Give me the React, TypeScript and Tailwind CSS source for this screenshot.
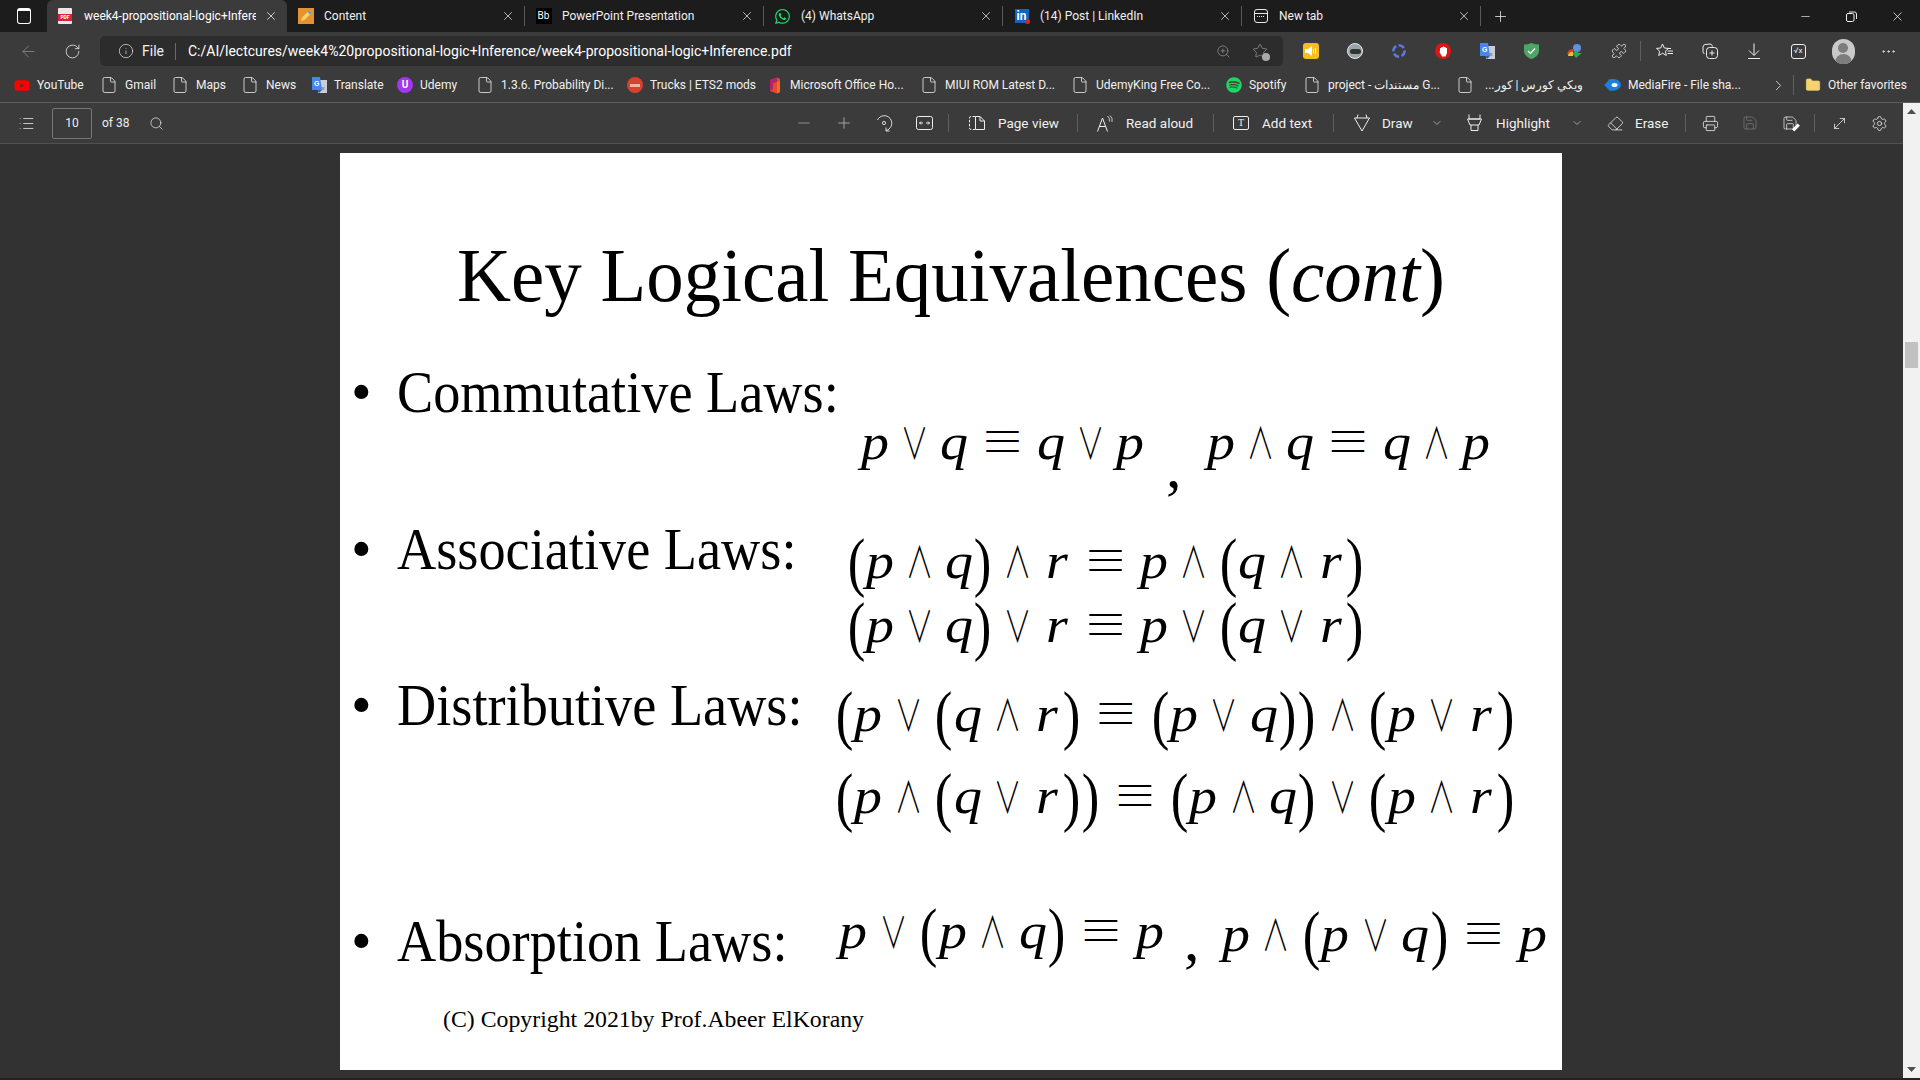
import { ArrowLeft, RotateCw, Info, ZoomIn, File, Search, X, Plus, Minus, Settings, Printer, Save, Eraser, ChevronDown, ChevronRight, MoreHorizontal, Puzzle, Star, List, MoveDiagonal, Folder } from 'lucide-react'
import { FaWhatsapp, FaYoutube, FaSpotify } from 'react-icons/fa'

const ui = "font-['Roboto',sans-serif]"

const FileIcon = () => <File size={18} strokeWidth={1.1} className="text-[#e8e8e8] shrink-0" />

const Translate = () => (
  <svg width="16" height="16" viewBox="0 0 16 16" className="shrink-0">
    <rect x="7" y="3" width="9" height="13" fill="#c9ced6" />
    <path d="M1 0 H9 L11 13 H1 Z" fill="#4a86e8" />
    <path d="M6 13 H11 L8 16 Z" fill="#2f5fb3" />
    <text x="3" y="9" fontSize="7" fill="#fff" fontWeight="700" fontFamily="Liberation Sans">G</text>
    <text x="10.5" y="13" fontSize="6" fill="#555" fontFamily="Liberation Sans">x</text>
  </svg>
)

const bookmarks = [
  { w: 'w-[86px]', label: 'YouTube', icon: <span className="w-4 h-4 shrink-0 flex items-center justify-center text-[#f00] "><FaYoutube size={17} /></span> },
  { w: 'w-[71px]', label: 'Gmail', icon: <FileIcon /> },
  { w: 'w-[70px]', label: 'Maps', icon: <FileIcon /> },
  { w: 'w-[70px]', label: 'News', icon: <FileIcon /> },
  { w: 'w-[86px]', label: 'Translate', icon: <Translate /> },
  { w: 'w-[79px]', label: 'Udemy', icon: <span className="w-4 h-4 shrink-0 rounded-full bg-[#a435f0] flex items-center justify-center text-white text-[10px] font-bold leading-none">U</span> },
  { w: 'w-[151px]', label: '1.3.6. Probability Di...', icon: <FileIcon /> },
  { w: 'w-[140px]', label: 'Trucks | ETS2 mods', icon: <span className="w-4 h-4 shrink-0 rounded-full bg-[#d8412f] flex items-center justify-center"><span className="w-2.5 h-[3px] bg-[#f3b4a8]" /></span> },
  {
    w: 'w-[153px]', label: 'Microsoft Office Ho...', icon: (
      <svg width="16" height="17" viewBox="0 0 16 17" className="shrink-0">
        <path d="M3 3 L10 0.5 L13 2 L13 15 L10 16.5 L3 14 Z" fill="#e8492a" />
        <path d="M3 3 L10 0.5 L10 5 L6 6 L6 12 L3 14 Z" fill="#b3236b" />
        <path d="M10 5 L13 4 L13 15 L10 16.5 Z" fill="#f26b21" />
      </svg>
    )
  },
  { w: 'w-[151px]', label: 'MIUI ROM Latest D...', icon: <FileIcon /> },
  { w: 'w-[155px]', label: 'UdemyKing Free Co...', icon: <FileIcon /> },
  { w: 'w-[77px]', label: 'Spotify', icon: <span className="text-[#1ed760] shrink-0"><FaSpotify size={16} /></span> },
  { w: 'w-[153px]', label: 'project - مستندات G...', icon: <FileIcon /> },
  { w: 'w-[148px]', label: '...ويكي كورس | كور', icon: <FileIcon />, gap: 'gap-[11px]' },
  {
    w: 'w-[166px]', label: 'MediaFire - File sha...', icon: (
      <svg width="17" height="12" viewBox="0 0 17 12" className="shrink-0">
        <path d="M0 6 C3 4 3 2 5 2 L4 1 C7 -0.5 16 -1 17 6 C16 12 7 12.5 4 11 L5 10 C3 10 3 8 0 6 Z" fill="#1b7fdb" />
        <ellipse cx="10.5" cy="6" rx="3" ry="2" fill="#fff" />
      </svg>
    )
  },
]

const tabs = [
  { w: 'w-[238px]', title: 'Content', icon: <span className="w-4 h-4 bg-[#e8912d] flex items-center justify-center"><svg width="14" height="14" viewBox="0 0 14 14"><path d="M2 12 L3 8.5 L10 1.5 L12.5 4 L5.5 11 Z" fill="#f5d36a" /><path d="M10 1.5 L12.5 4 L11 5.5 L8.5 3 Z" fill="#45a5d8" /></svg></span> },
  { w: 'w-[239px]', title: 'PowerPoint Presentation', icon: <span className="w-4 h-4 bg-black text-white text-[10px] flex items-center justify-center leading-none">Bb</span> },
  { w: 'w-[239px]', title: '(4) WhatsApp', icon: <span className="text-[#25d366]"><FaWhatsapp size={17} /></span> },
  { w: 'w-[239px]', title: '(14) Post | LinkedIn', icon: <span className="relative w-[14px] h-[14px] bg-[#0a66c2] text-white text-[12px] font-bold flex items-center justify-center leading-none">in<span className="absolute -right-[1px] -bottom-[1px] w-[5px] h-[5px] rounded-full bg-[#e3202a]" /></span> },
  { w: 'w-[239px]', title: 'New tab', icon: <span className="w-[14px] h-[14px] rounded-[3px] border border-[#e8e8e8] flex flex-col"><span className="h-[4px] border-b border-[#e8e8e8]" /><span className="mt-[2px] ml-[2px] w-[7px] border-t border-dotted border-[#e8e8e8]" /></span> },
]

function TabBar() {
  return (
    <div className="h-8 bg-[#1c1c1c] flex items-end text-[12px] text-[#f0f0f0]">
      <div className="w-[47px] h-8 flex items-center justify-center">
        <span className="w-[14px] h-[16px] rounded-[3px] border border-white border-t-[3px]" />
      </div>
      <div className="w-[240px] h-8 rounded-t-[6px] bg-[#3b3b3b] flex items-center pl-[11px] pr-[9px] text-white">
        <span className="relative w-[14px] h-4 bg-[#e8e8e8] rounded-[1px] mr-[12px] shrink-0">
          <span className="absolute left-0 right-0 top-[6px] h-[7px] bg-[#d9232e] text-white text-[5px] font-bold leading-[7px] text-center">PDF</span>
        </span>
        <span className="w-[172px] whitespace-nowrap overflow-hidden mr-auto">week4-propositional-logic+Inference</span>
        <X size={14} strokeWidth={1.25} />
      </div>
      {tabs.map(t => (
        <div key={t.title} className={`${t.w} h-8 flex items-center shrink-0`}>
          <div className="flex-1 flex items-center pl-[10px] pr-[9px] min-w-0">
            <span className="w-[17px] flex justify-center shrink-0">{t.icon}</span>
            <span className="ml-[10px] whitespace-nowrap mr-auto">{t.title}</span>
            <X size={14} strokeWidth={1.25} />
          </div>
          <span className="w-px h-[20px] bg-[#5a5a5a]" />
        </div>
      ))}
      <div className="w-[38px] h-8 flex items-center justify-center"><Plus size={17} strokeWidth={1.1} /></div>
      <div className="ml-auto h-8 flex items-center">
        <span className="w-[46px] flex justify-center"><Minus size={13} strokeWidth={1.25} /></span>
        <span className="w-[46px] flex justify-center"><svg width="11" height="11" viewBox="0 0 11 11" fill="none" stroke="#eee"><rect x="0.5" y="2.5" width="7.5" height="8" rx="1.5" /><path d="M3 1 H8.5 Q10.5 1 10.5 3 V8" /></svg></span>
        <span className="w-[46px] flex justify-center"><X size={15} strokeWidth={1.25} /></span>
      </div>
    </div>
  )
}

const extClass = "w-[44px] flex justify-center items-center shrink-0"

function Toolbar() {
  return (
    <div className="h-[38px] bg-[#3b3b3b] flex items-center text-[#f0f0f0]">
      <span className="w-[56px] flex justify-center text-[#858585]"><ArrowLeft size={19} strokeWidth={1.1} /></span>
      <span className="w-[32px] flex justify-center"><RotateCw size={17} strokeWidth={1.1} /></span>
      <div className="ml-[12px] w-[1183px] h-[30px] rounded-[5px] bg-[#2c2c2c] flex items-center text-[14px]">
        <span className="ml-[18px] mr-[8px]"><Info size={16} strokeWidth={1} /></span>
        <span>File</span>
        <span className="ml-[11px] mr-[12px] w-px h-[17px] bg-[#6a6a6a]" />
        <span className="whitespace-nowrap text-white">C:/AI/lectcures/week4%20propositional-logic+Inference/week4-propositional-logic+Inference.pdf</span>
        <span className="ml-auto text-[#9a9a9a] flex items-center gap-[21px] pr-[15px]">
          <ZoomIn size={15} strokeWidth={1.1} />
          <span className="relative"><Star size={16} strokeWidth={1.1} /><span className="absolute -right-[2px] -bottom-[2px] w-[8px] h-[8px] rounded-full bg-[#aaa]" /></span>
        </span>
      </div>
      <div className="flex items-center ml-[6px]">
        <span className={extClass}>
          <span className="w-4 h-4 rounded-[3px] bg-[#f5bd1f] flex items-center justify-center">
            <svg width="12" height="10" viewBox="0 0 12 10" fill="#fff"><path d="M0 3 H3 L7 0 V10 L3 7 H0 Z" /><path d="M8.5 3 V7 M10.5 2 V8" stroke="#fff" /></svg>
          </span>
        </span>
        <span className={extClass}><span className="w-4 h-4 rounded-full bg-[#9aa5aa] border border-[#e4e8ea] flex items-center justify-center"><span className="w-[11px] h-[5px] rounded-full bg-[#333]" /></span></span>
        <span className={extClass}><svg width="16" height="16" viewBox="0 0 16 16" fill="none" stroke="#6079e8" strokeWidth="2.4" strokeDasharray="6 2.4"><circle cx="8" cy="8" r="5.6" /></svg></span>
        <span className={extClass}>
          <span className="w-4 h-4 rounded-full bg-[#e01414] flex items-center justify-center">
            <svg width="9" height="11" viewBox="0 0 9 11" fill="#fff"><path d="M1 5 V2 H2.4 V1 H4 V0.5 H5.2 V1 H6.6 V2 H8 V7 L6.5 10.5 H3 L0.5 6 Z" /></svg>
          </span>
        </span>
        <span className={extClass}><Translate /></span>
        <span className={extClass}>
          <svg width="15" height="16" viewBox="0 0 15 16"><path d="M7.5 0 C10 1 12.5 1.5 15 1.5 V8 C15 12 11 15 7.5 16 C4 15 0 12 0 8 V1.5 C2.5 1.5 5 1 7.5 0 Z" fill="#4da566" /><path d="M4 8 L6.5 10.5 L11 5.5" stroke="#fff" strokeWidth="1.2" fill="none" /></svg>
        </span>
        <span className={extClass}>
          <svg width="16" height="16" viewBox="0 0 16 16"><circle cx="10" cy="5" r="4" fill="#5f93d8" /><path d="M0 11 A6 6 0 0 1 7 6 L6 9 A3 3 0 0 0 3 12 Z" fill="#e8332a" /><path d="M1 13 A4 4 0 0 1 6 9 L6 13 Z" fill="#f2c02a" /><path d="M7 8 L12 8 L11 10 L15 10 L9 15 L6 11 Z" fill="#2faa3c" /></svg>
        </span>
        <span className={extClass}><Puzzle size={16} strokeWidth={1.1} /></span>
        <span className="w-px h-[20px] bg-[#5f5f5f] -ml-[1px] mr-[1px]" />
        <span className="w-[46px] flex justify-center">
          <svg width="18" height="16" viewBox="0 0 18 16" fill="none" stroke="#eee"><path d="M6.5 1 L8.3 5 L12.5 5.4 L9.4 8.2 L10.3 12.5 L6.5 10.2 L2.7 12.5 L3.6 8.2 L0.5 5.4 L4.7 5 Z" /><path d="M11.5 8 H17 M11.5 10.5 H17 M11.5 5.5 H15" /></svg>
        </span>
        <span className={extClass}>
          <svg width="17" height="17" viewBox="0 0 17 17" fill="none" stroke="#eee"><path d="M2.5 11 Q1 10 1 8.5 V4 Q1 2 3 1.5 L8 1 Q10 1 10.5 3.5" /><rect x="4.5" y="4.5" width="11" height="11" rx="3" /><path d="M10 7.5 V12.5 M7.5 10 H12.5" /></svg>
        </span>
        <span className={extClass}>
          <svg width="14" height="16" viewBox="0 0 14 16" fill="none" stroke="#eee"><path d="M7 0.5 V12 M2 7.5 L7 12.5 L12 7.5 M1 15.5 H13" /></svg>
        </span>
        <span className={extClass}><span className="w-[15px] h-[15px] rounded-[3px] border border-[#eee] text-[8px] flex items-center justify-center leading-none">√x</span></span>
        <span className="w-[46px] flex justify-center">
          <span className="w-[23px] h-[25px] rounded-full bg-[#c9c9c9] flex flex-col items-center overflow-hidden">
            <span className="mt-[4px] w-[10px] h-[10px] rounded-full bg-[#7d7d7d]" />
            <span className="mt-[1px] w-[17px] h-[10px] rounded-t-full bg-[#7d7d7d]" />
          </span>
        </span>
        <span className="w-[44px] flex justify-center"><MoreHorizontal size={17} strokeWidth={1.25} /></span>
      </div>
    </div>
  )
}

function Bookmarks() {
  return (
    <div className="h-[33px] bg-[#3b3b3b] flex items-center pl-[14px] pb-[2px] text-[12px] text-[#f0f0f0] border-b border-[#5c5c5c]">
      {bookmarks.map(b => (
        <div key={b.label} className={`${b.w} shrink-0 flex items-center ${b.gap ?? 'gap-[7px]'} whitespace-nowrap`}>
          {b.icon}
          <span>{b.label}</span>
        </div>
      ))}
      <ChevronRight size={17} strokeWidth={1.1} />
      <span className="ml-[6px] w-px h-[20px] bg-[#5f5f5f]" />
      <span className="ml-[11px] text-[#f5d370]"><Folder size={16} fill="#f5d370" strokeWidth={1} /></span>
      <span className="ml-[7px] whitespace-nowrap">Other favorites</span>
    </div>
  )
}

const Sep = ({ cls }: { cls: string }) => <span className={`w-px h-[18px] bg-[#5f5f5f] shrink-0 ${cls}`} />

function PdfBar() {
  return (
    <div className="h-[41px] bg-[#3b3b3b] flex items-center text-[13.5px] text-[#f0f0f0] border-b border-[#505050] whitespace-nowrap">
      <span className="w-[52px] flex justify-center"><List size={17} strokeWidth={1.1} /></span>
      <span className="w-[40px] h-[31px] border border-[#767676] rounded-[2px] flex items-center justify-center text-[12px]">10</span>
      <span className="ml-[10px] w-[27px] text-[12px]">of 38</span>
      <span className="ml-[20px] w-[16px]"><Search size={15} strokeWidth={1.1} /></span>
      <span className="ml-[619px] w-[40px] flex justify-center text-[#a0a0a0]"><Minus size={18} strokeWidth={1.1} /></span>
      <span className="w-[40px] flex justify-center text-[#b8b8b8]"><Plus size={18} strokeWidth={1.1} /></span>
      <span className="w-[40px] flex justify-center">
        <svg width="18" height="18" viewBox="0 0 18 18" fill="none" stroke="#ddd"><path d="M2.5 6 A7.5 7.5 0 1 1 11 16.5" /><path d="M11 13.5 V17 H14.5" /><circle cx="9" cy="9" r="1.6" /></svg>
      </span>
      <span className="w-[40px] flex justify-center">
        <svg width="17" height="14" viewBox="0 0 17 14" fill="none" stroke="#eee"><rect x="0.5" y="0.5" width="16" height="13" rx="2" /><path d="M3.5 7 H7 M10 7 H13.5 M3.5 7 L5 5.5 M3.5 7 L5 8.5 M13.5 7 L12 5.5 M13.5 7 L12 8.5" /></svg>
      </span>
      <Sep cls="ml-[4px]" />
      <span className="ml-[20px] w-[16px]">
        <svg width="16" height="14" viewBox="0 0 16 14" fill="none" stroke="#eee"><path d="M6 0.5 H2 Q0.5 0.5 0.5 2 V12 Q0.5 13.5 2 13.5 H6" strokeDasharray="2.5 1.5" /><path d="M6.5 0.5 H11 L15.5 5 V13.5 H6.5 Z M11 0.5 V5 H15.5" /></svg>
      </span>
      <span className="ml-[13px] w-[60px]">Page view</span>
      <Sep cls="ml-[19px]" />
      <span className="ml-[19px] w-[16px]">
        <svg width="17" height="17" viewBox="0 0 17 17" fill="none" stroke="#eee"><path d="M0.5 16.5 L5.5 3 L10.5 16.5 M2.3 11.5 H8.7" /><path d="M10.5 1 Q13 3 12.5 6.5 M13 0.5 Q16 3 15 7" strokeWidth="0.8" /></svg>
      </span>
      <span className="ml-[13px] w-[69px]">Read aloud</span>
      <Sep cls="ml-[18px]" />
      <span className="ml-[19px] w-[16px] h-[14px] rounded-[2px] border border-[#eee] flex items-center justify-center text-[10px] leading-none font-['Liberation_Serif',serif]">T</span>
      <span className="ml-[13px] w-[53px]">Add text</span>
      <Sep cls="ml-[18px]" />
      <span className="ml-[20px] w-[16px]"><svg width="16" height="18" viewBox="0 0 16 18" fill="none" stroke="#eee"><path d="M0.5 4 H15.5 L8 17 Z M3 4 L4 0.5 M13 4 L12 0.5" /></svg></span>
      <span className="ml-[12px] w-[31px]">Draw</span>
      <span className="ml-[18px] w-[12px]"><ChevronDown size={12} strokeWidth={1.1} /></span>
      <span className="ml-[24px] w-[16px]"><svg width="15" height="18" viewBox="0 0 15 18" fill="none" stroke="#eee"><path d="M2 0.5 V5 H13 V0.5 M0.5 5 H14.5 L12 11 H3 Z M4 11 V16.5 H11 V11" /></svg></span>
      <span className="ml-[13px] w-[57px]">Highlight</span>
      <span className="ml-[18px] w-[12px]"><ChevronDown size={12} strokeWidth={1.1} /></span>
      <span className="ml-[24px] w-[16px]"><Eraser size={17} strokeWidth={1.1} /></span>
      <span className="ml-[12px] w-[32px]">Erase</span>
      <Sep cls="ml-[18px]" />
      <span className="ml-[16px] w-[16px]"><Printer size={17} strokeWidth={1.1} /></span>
      <span className="ml-[24px] w-[16px] text-[#7a7a7a]"><Save size={16} strokeWidth={1.1} /></span>
      <span className="ml-[24px] w-[16px] relative"><Save size={16} strokeWidth={1.1} /><span className="absolute right-[-2px] bottom-[2px] w-[8px] h-[3px] bg-white rotate-[-45deg]" /></span>
      <Sep cls="ml-[16px]" />
      <span className="ml-[16px] w-[16px]"><MoveDiagonal size={17} strokeWidth={1.1} /></span>
      <span className="ml-[24px] w-[16px]"><Settings size={17} strokeWidth={1.1} /></span>
    </div>
  )
}

// one math token: italic letter, thin operator, or tall bracket
function Tok({ t }: { t: string }) {
  if (t === '(' || t === ')')
    return <span className="font-['Liberation_Serif',serif] text-[66px] leading-none w-[19px] flex justify-center translate-y-[6px] scale-x-[0.8]">{t}</span>
  if (t === '∨' || t === '∧')
    return <span className="font-['Noto_Sans_CJK_JP',sans-serif] font-light text-[43px] leading-none mx-[15px] w-[21px] flex justify-center scale-x-[0.64]">{t}</span>
  if (t === '≡')
    return <span className="font-['Noto_Sans_CJK_JP',sans-serif] font-light text-[44px] leading-none mx-[18px] w-[33px] flex justify-center -translate-y-[1px]">{t}</span>
  return <span className="italic text-[50px] leading-none w-[28px] flex justify-center scale-x-[1.12]">{t}</span>
}

function Eq({ s, cls = '' }: { s: string; cls?: string }) {
  return (
    <div className={`flex items-baseline whitespace-nowrap text-black font-['Liberation_Serif',serif] ${cls}`}>
      {s.split(' ').map((t, i) => <Tok key={i} t={t} />)}
    </div>
  )
}

const Comma = ({ cls }: { cls: string }) => (
  <span className={`text-[62px] leading-none font-['Liberation_Serif',serif] text-black ${cls}`}>,</span>
)

function Law({ label, h, children }: { label: string; h: string; children: React.ReactNode }) {
  return (
    <div className={`flex ${h}`}>
      <div className="w-[57px] pl-[11px] text-[59px] leading-[66px] text-black shrink-0">•</div>
      <div className="w-[400px] shrink-0 text-[59px] leading-[66px] text-black whitespace-nowrap origin-left scale-x-[0.92]">{label}</div>
      {children}
    </div>
  )
}

function Slide() {
  return (
    <div className="w-[1222px] h-[917px] bg-white font-['Liberation_Serif',serif] flex flex-col">
      <h1 className="h-[206px] pt-[72px] text-[77px] leading-[100px] text-center text-black font-normal scale-x-[0.973]">
        Key Logical Equivalences (<span className="italic">cont</span>)
      </h1>
      <Law label="Commutative Laws:" h="h-[157px]">
        <div className="flex ml-[64px] mt-[58px] h-[60px]">
          <Eq s="p ∨ q ≡ q ∨ p" />
          <Comma cls="ml-[22px] mt-[18px]" />
          <Eq s="p ∧ q ≡ q ∧ p" cls="ml-[25px]" />
        </div>
      </Law>
      <Law label="Associative Laws:" h="h-[156px]">
        <div className="ml-[50px] mt-[7px] flex flex-col gap-[2px]">
          <Eq s="( p ∧ q ) ∧ r ≡ p ∧ ( q ∧ r )" cls="h-[62px]" />
          <Eq s="( p ∨ q ) ∨ r ≡ p ∨ ( q ∨ r )" cls="h-[62px]" />
        </div>
      </Law>
      <Law label="Distributive Laws:" h="h-[236px]">
        <div className="ml-[38px] mt-[4px] flex flex-col gap-[20px]">
          <Eq s="( p ∨ ( q ∧ r ) ≡ ( p ∨ q ) ) ∧ ( p ∨ r )" cls="h-[62px] gap-[0.4px]" />
          <Eq s="( p ∧ ( q ∨ r ) ) ≡ ( p ∧ q ) ∨ ( p ∧ r )" cls="h-[62px] gap-[0.4px]" />
        </div>
      </Law>
      <Law label="Absorption Laws:" h="h-[95px]">
        <div className="ml-[42px] -mt-[15px] flex h-[60px]">
          <Eq s="p ∨ ( p ∧ q ) ≡ p" cls="gap-[0.5px]" />
          <Comma cls="ml-[20px] mt-[15px]" />
          <Eq s="p ∧ ( p ∨ q ) ≡ p" cls="ml-[22px] mt-[3px] gap-[0.5px]" />
        </div>
      </Law>
      <div className="pl-[103px] text-[23.8px] leading-[32px] text-black whitespace-nowrap">(C) Copyright 2021by Prof.Abeer ElKorany</div>
    </div>
  )
}

export default function App() {
  return (
    <div className={`w-[1920px] h-[1080px] overflow-hidden bg-[#323232] flex flex-col ${ui}`}>
      <TabBar />
      <Toolbar />
      <Bookmarks />
      <div className="flex-1 flex min-h-0">
        <div className="flex-1 min-w-0 flex flex-col">
          <PdfBar />
          <div className="flex-1 pl-[340px] pt-[9px]">
            <Slide />
          </div>
        </div>
        <div className="w-[17px] bg-[#f1f1f1] flex flex-col items-center pt-[6px] pb-[6px]">
          <svg width="9" height="5" viewBox="0 0 9 5" fill="#505050"><path d="M4.5 0 L9 5 H0 Z" /></svg>
          <span className="mt-[228px] w-[13px] h-[26px] bg-[#c1c1c1]" />
          <svg width="9" height="5" viewBox="0 0 9 5" fill="#505050" className="mt-auto"><path d="M4.5 5 L9 0 H0 Z" /></svg>
        </div>
      </div>
      <div className="h-[2px] bg-[#232323]" />
    </div>
  )
}
